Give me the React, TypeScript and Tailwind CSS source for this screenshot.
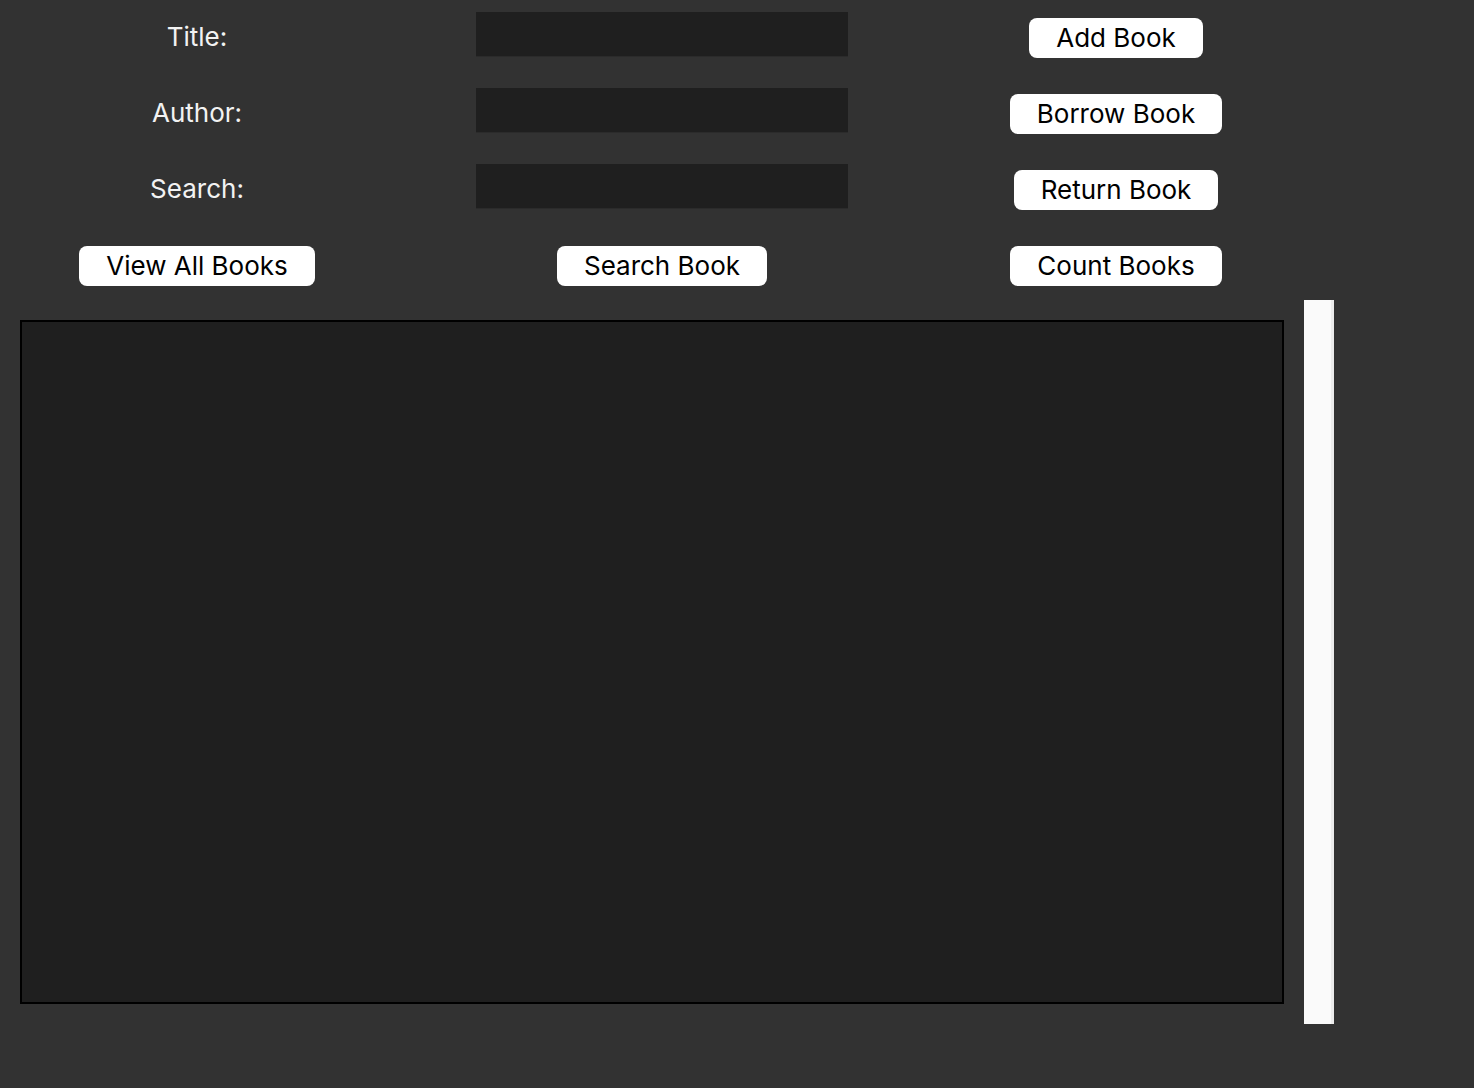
import React from "react";

const font = { fontFamily: "Inter, 'Liberation Sans', sans-serif" };

function Btn({ label }: { label: string }) {
  return (
    <button className="h-[40px] px-[27px] rounded-[8px] bg-white text-black text-[26px] leading-none">
      {label}
    </button>
  );
}

function Field() {
  return <input className="mb-[8px] w-[372px] h-[44px] bg-[#1f1f1f] shadow-[0_1px_0_#2b2b2b] outline-none" />;
}

export default function App() {
  const rows = [
    { label: "Title:", action: "Add Book" },
    { label: "Author:", action: "Borrow Book" },
    { label: "Search:", action: "Return Book" },
  ];

  return (
    <div className="w-[1474px] h-[1088px] bg-[#323232] overflow-hidden" style={font}>
      {rows.map((r) => (
        <div key={r.label} className="flex h-[76px] items-center">
          <div className="w-[394px] flex justify-center mb-[4px] text-[26px] text-[#f2f2f2]">{r.label}</div>
          <div className="w-[536px] flex justify-center">
            <Field />
          </div>
          <div className="w-[372px] flex justify-center">
            <Btn label={r.action} />
          </div>
        </div>
      ))}

      {/* bottom button row */}
      <div className="flex h-[72px] items-start pt-[18px]">
        <div className="w-[394px] flex justify-center">
          <Btn label="View All Books" />
        </div>
        <div className="w-[536px] flex justify-center">
          <Btn label="Search Book" />
        </div>
        <div className="w-[372px] flex justify-center">
          <Btn label="Count Books" />
        </div>
      </div>

      {/* list + scrollbar */}
      <div className="flex pl-[20px]">
        <div className="mt-[20px] w-[1264px] h-[684px] border-2 border-black bg-[#1f1f1f]" />
        <div className="ml-[20px] w-[30px] h-[724px] bg-[#fafafa] border-r-[3px] border-[#ececec]" />
      </div>
    </div>
  );
}
